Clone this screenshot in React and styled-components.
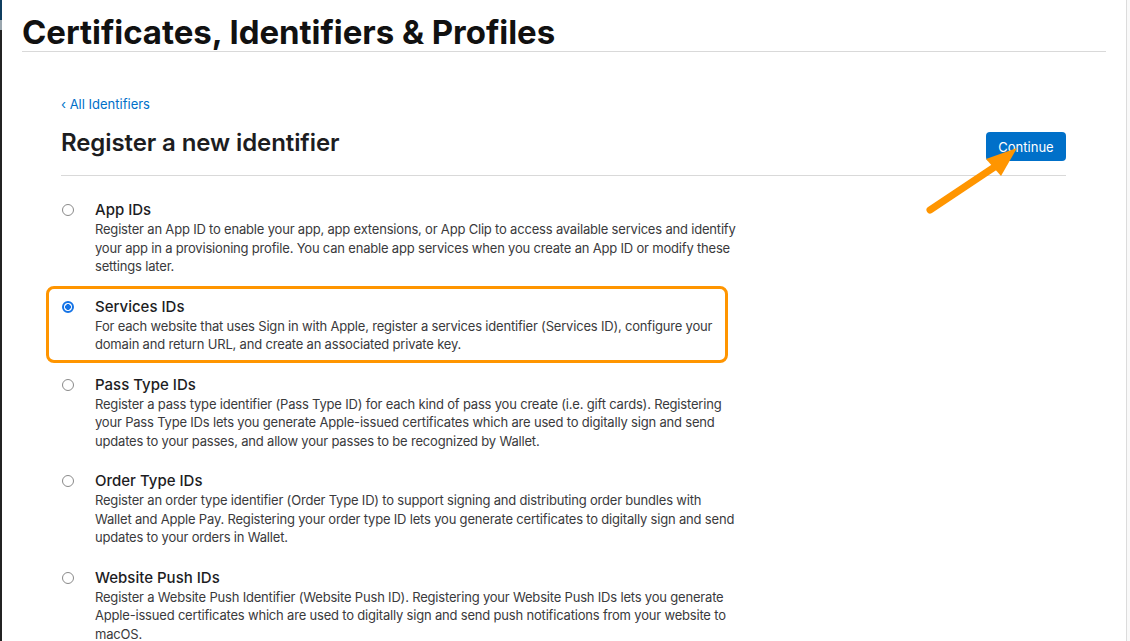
import React, { useState } from "react";
import styled, { createGlobalStyle } from "styled-components";

const GlobalStyle = createGlobalStyle`
  html, body {
    margin: 0;
    padding: 0;
    background: #fff;
  }
  body {
    font-family: Inter, "Liberation Sans", Arial, sans-serif;
    color: #1d1d1f;
    -webkit-font-smoothing: antialiased;
  }
`;

const Page = styled.div`
  position: relative;
  display: flex;
  width: 1130px;
  height: 641px;
  overflow: hidden;
  background: #fff;
`;

const LeftEdge = styled.div`
  width: 2px;
  flex-shrink: 0;
  background: linear-gradient(
    to bottom,
    #0f3d5f 0,
    #0f3d5f 20px,
    #9aa6ae 20px,
    #9aa6ae 30px,
    #232323 30px
  );
`;

const Main = styled.main`
  flex: 1;
  min-width: 0;
`;

const Scrollbar = styled.div`
  width: 3px;
  flex-shrink: 0;
  border-left: 1px solid #dcdcdc;
  background: #f9f9f9;
`;

const Header = styled.header`
  margin: 0 20px;
  padding-top: 13px;
  border-bottom: 1px solid #d9d9d9;
`;

const Title = styled.h1`
  margin: 0;
  font-size: 33px;
  line-height: 38px;
  font-weight: 700;
  letter-spacing: -0.05px;
  color: #111;
`;

const Content = styled.section`
  padding: 43px 60px 0 59px;
`;

const BackLink = styled.a`
  display: block;
  font-size: 13px;
  line-height: 18px;
  color: #0070c9;
  text-decoration: none;
  cursor: pointer;
`;

const TopRow = styled.div`
  display: flex;
  justify-content: space-between;
  align-items: flex-start;
  margin-top: 15px;
  padding-bottom: 14px;
  border-bottom: 1px solid #d9d9d9;
`;

const Heading = styled.h2`
  margin: 0;
  font-size: 24px;
  line-height: 30px;
  font-weight: 600;
  letter-spacing: -0.1px;
  color: #1d1d1f;
`;

const Button = styled.button`
  width: 80px;
  height: 29px;
  margin-top: 4px;
  border: none;
  border-radius: 4px;
  background: #0070c9;
  color: #fff;
  font-family: inherit;
  font-size: 13px;
  cursor: pointer;
`;

const Options = styled.div`
  display: flex;
  flex-direction: column;
  gap: 21px;
  width: 667px;
  margin-top: 24px;
`;

const Option = styled.label`
  position: relative;
  display: grid;
  grid-template-columns: 34px 1fr;
  cursor: pointer;

  &::after {
    content: "";
    display: ${(p) => (p.$highlighted ? "block" : "none")};
    position: absolute;
    left: -15px;
    right: 0;
    top: -11px;
    bottom: -9px;
    border: 3px solid #ff9500;
    border-radius: 8px;
    pointer-events: none;
  }
`;

const Radio = styled.span`
  box-sizing: border-box;
  width: 12px;
  height: 12px;
  margin: 4px 0 0 1px;
  border-radius: 50%;
  border: ${(p) => (p.$checked ? "2px solid #1473e6" : "1px solid #8a8a8a")};
  background: ${(p) =>
    p.$checked
      ? "radial-gradient(circle, #1473e6 0 2.6px, #fff 3.1px)"
      : "#fff"};
`;

const OptionTitle = styled.div`
  font-size: 15px;
  line-height: 20px;
  font-weight: 500;
  color: #1d1d1f;
`;

const Desc = styled.div`
  font-size: 13px;
  line-height: 18.5px;
  letter-spacing: -0.19px;
  color: #3a3a3c;
`;

const Line = styled.span`
  display: block;
  white-space: nowrap;
`;

const Arrow = styled.svg`
  position: absolute;
  left: 920px;
  top: 140px;
  width: 110px;
  height: 80px;
  pointer-events: none;
`;

const options = [
  {
    id: "app",
    title: "App IDs",
    lines: [
      "Register an App ID to enable your app, app extensions, or App Clip to access available services and identify",
      "your app in a provisioning profile. You can enable app services when you create an App ID or modify these",
      "settings later.",
    ],
  },
  {
    id: "services",
    title: "Services IDs",
    lines: [
      "For each website that uses Sign in with Apple, register a services identifier (Services ID), configure your",
      "domain and return URL, and create an associated private key.",
    ],
  },
  {
    id: "pass",
    title: "Pass Type IDs",
    lines: [
      "Register a pass type identifier (Pass Type ID) for each kind of pass you create (i.e. gift cards). Registering",
      "your Pass Type IDs lets you generate Apple-issued certificates which are used to digitally sign and send",
      "updates to your passes, and allow your passes to be recognized by Wallet.",
    ],
  },
  {
    id: "order",
    title: "Order Type IDs",
    lines: [
      "Register an order type identifier (Order Type ID) to support signing and distributing order bundles with",
      "Wallet and Apple Pay. Registering your order type ID lets you generate certificates to digitally sign and send",
      "updates to your orders in Wallet.",
    ],
  },
  {
    id: "push",
    title: "Website Push IDs",
    lines: [
      "Register a Website Push Identifier (Website Push ID). Registering your Website Push IDs lets you generate",
      "Apple-issued certificates which are used to digitally sign and send push notifications from your website to",
      "macOS.",
    ],
  },
];

function App() {
  const [selected, setSelected] = useState("services");

  return (
    <>
      <GlobalStyle />
      <Page>
        <LeftEdge />
        <Main>
          <Header>
            <Title>Certificates, Identifiers &amp; Profiles</Title>
          </Header>
          <Content>
            <BackLink>‹ All Identifiers</BackLink>
            <TopRow>
              <Heading>Register a new identifier</Heading>
              <Button>Continue</Button>
            </TopRow>
            <Options>
              {options.map((o) => (
                <Option
                  key={o.id}
                  $highlighted={o.id === "services"}
                  onClick={() => setSelected(o.id)}
                >
                  <Radio $checked={selected === o.id} />
                  <div>
                    <OptionTitle>{o.title}</OptionTitle>
                    <Desc>
                      {o.lines.map((l, i) => (
                        <Line key={i}>{l}</Line>
                      ))}
                    </Desc>
                  </div>
                </Option>
              ))}
            </Options>
          </Content>
        </Main>
        <Scrollbar />
        {/* annotation arrow pointing at Continue */}
        <Arrow viewBox="0 0 110 80">
          <line
            x1="10"
            y1="70"
            x2="76"
            y2="26"
            stroke="#ff9500"
            strokeWidth="7"
            strokeLinecap="round"
          />
          <polygon points="97,8 66,19 81,36" fill="#ff9500" />
        </Arrow>
      </Page>
    </>
  );
}

export default App;
